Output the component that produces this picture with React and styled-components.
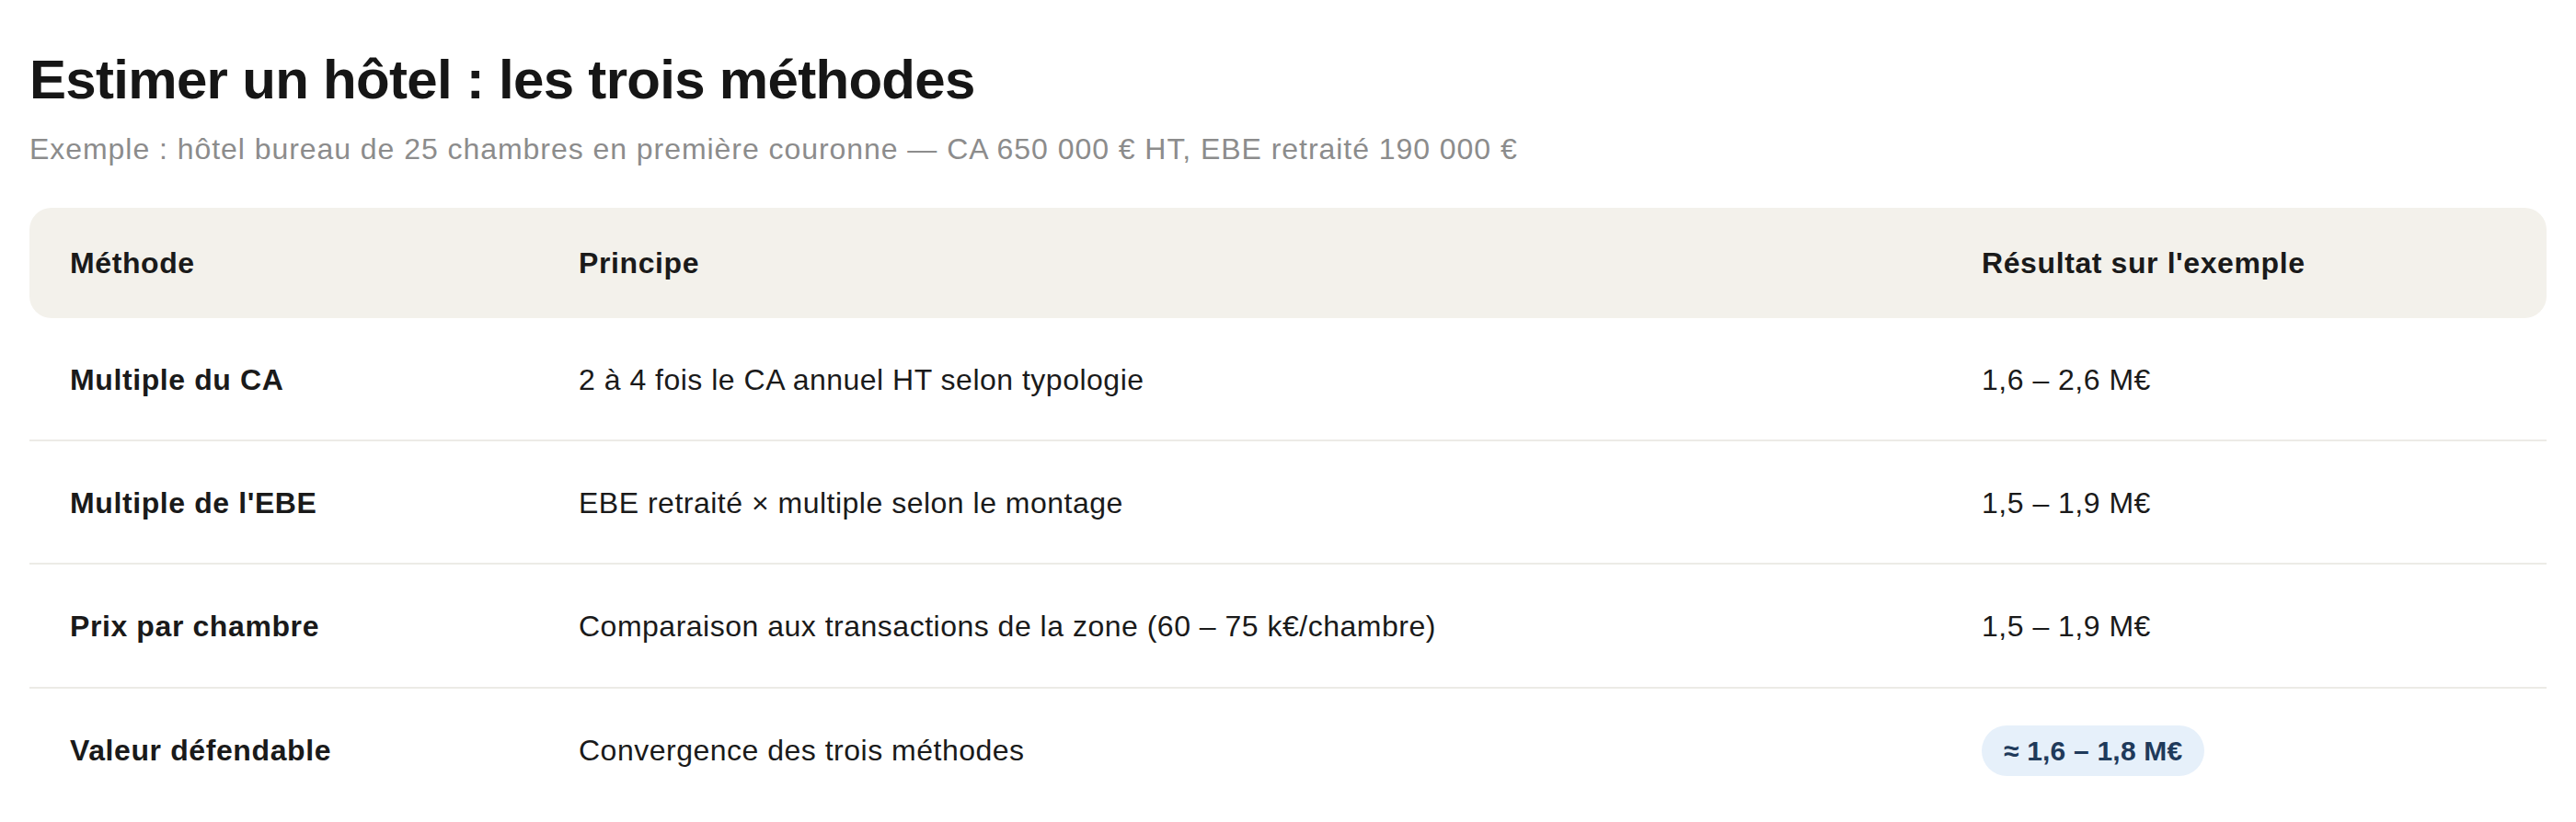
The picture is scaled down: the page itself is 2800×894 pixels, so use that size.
import styled, { createGlobalStyle } from "styled-components";

const GlobalStyle = createGlobalStyle`
  body {
    margin: 0;
    background: #ffffff;
    font-family: "Liberation Sans", Arial, Helvetica, sans-serif;
    color: #1a1a1a;
  }
`;

const Page = styled.div`
  padding: 51px 32px 0;
`;

const Title = styled.h1`
  margin: 0;
  font-size: 60px;
  line-height: 72px;
  font-weight: 700;
  letter-spacing: -0.7px;
  color: #161616;
`;

const Subtitle = styled.p`
  margin: 15px 0 0;
  font-size: 32px;
  line-height: 48px;
  letter-spacing: 0.95px;
  color: #8c8c8c;
`;

const Table = styled.table`
  margin-top: 40px;
  width: 100%;
  table-layout: fixed;
  border-collapse: separate;
  border-spacing: 0;
  font-size: 32px;
  line-height: 1.4;
`;

const HeadCell = styled.th`
  background: #f3f1eb;
  padding: 37.5px 44px;
  text-align: left;
  font-weight: 700;
  letter-spacing: 0.6px;
  color: #1a1a1a;

  &:first-child {
    border-radius: 24px 0 0 24px;
  }
  &:last-child {
    border-radius: 0 24px 24px 0;
  }
`;

const Row = styled.tr`
  &:last-child td {
    border-bottom: none;
  }
`;

const Cell = styled.td`
  padding: 45px 44px 42.5px;
  border-bottom: 2px solid #ecebe6;
  font-weight: ${({ $strong }) => ($strong ? 700 : 400)};
  letter-spacing: ${({ $strong }) => ($strong ? "0.6px" : "0.5px")};
  color: #1a1a1a;
`;

const Badge = styled.span`
  display: inline;
  padding: 11px 24px;
  border-radius: 999px;
  background: #e6f0fa;
  color: #1f3a5a;
  font-size: 30px;
  font-weight: 700;
  letter-spacing: 0.2px;
  line-height: normal;
`;

const rows = [
  {
    method: "Multiple du CA",
    principle: "2 à 4 fois le CA annuel HT selon typologie",
    result: "1,6 – 2,6 M€",
  },
  {
    method: "Multiple de l'EBE",
    principle: "EBE retraité × multiple selon le montage",
    result: "1,5 – 1,9 M€",
  },
  {
    method: "Prix par chambre",
    principle: "Comparaison aux transactions de la zone (60 – 75 k€/chambre)",
    result: "1,5 – 1,9 M€",
  },
  {
    method: "Valeur défendable",
    principle: "Convergence des trois méthodes",
    result: "≈ 1,6 – 1,8 M€",
    highlight: true,
  },
];

export default function App() {
  return (
    <>
      <GlobalStyle />
      <Page>
        <Title>Estimer un hôtel : les trois méthodes</Title>
        <Subtitle>
          Exemple : hôtel bureau de 25 chambres en première couronne — CA 650
          000 € HT, EBE retraité 190 000 €
        </Subtitle>
        <Table>
          <colgroup>
            <col style={{ width: 553 }} />
            <col style={{ width: 1525 }} />
            <col />
          </colgroup>
          <thead>
            <tr>
              <HeadCell>Méthode</HeadCell>
              <HeadCell>Principe</HeadCell>
              <HeadCell>Résultat sur l'exemple</HeadCell>
            </tr>
          </thead>
          <tbody>
            {rows.map((r) => (
              <Row key={r.method}>
                <Cell $strong>{r.method}</Cell>
                <Cell>{r.principle}</Cell>
                <Cell>
                  {r.highlight ? <Badge>{r.result}</Badge> : r.result}
                </Cell>
              </Row>
            ))}
          </tbody>
        </Table>
      </Page>
    </>
  );
}
